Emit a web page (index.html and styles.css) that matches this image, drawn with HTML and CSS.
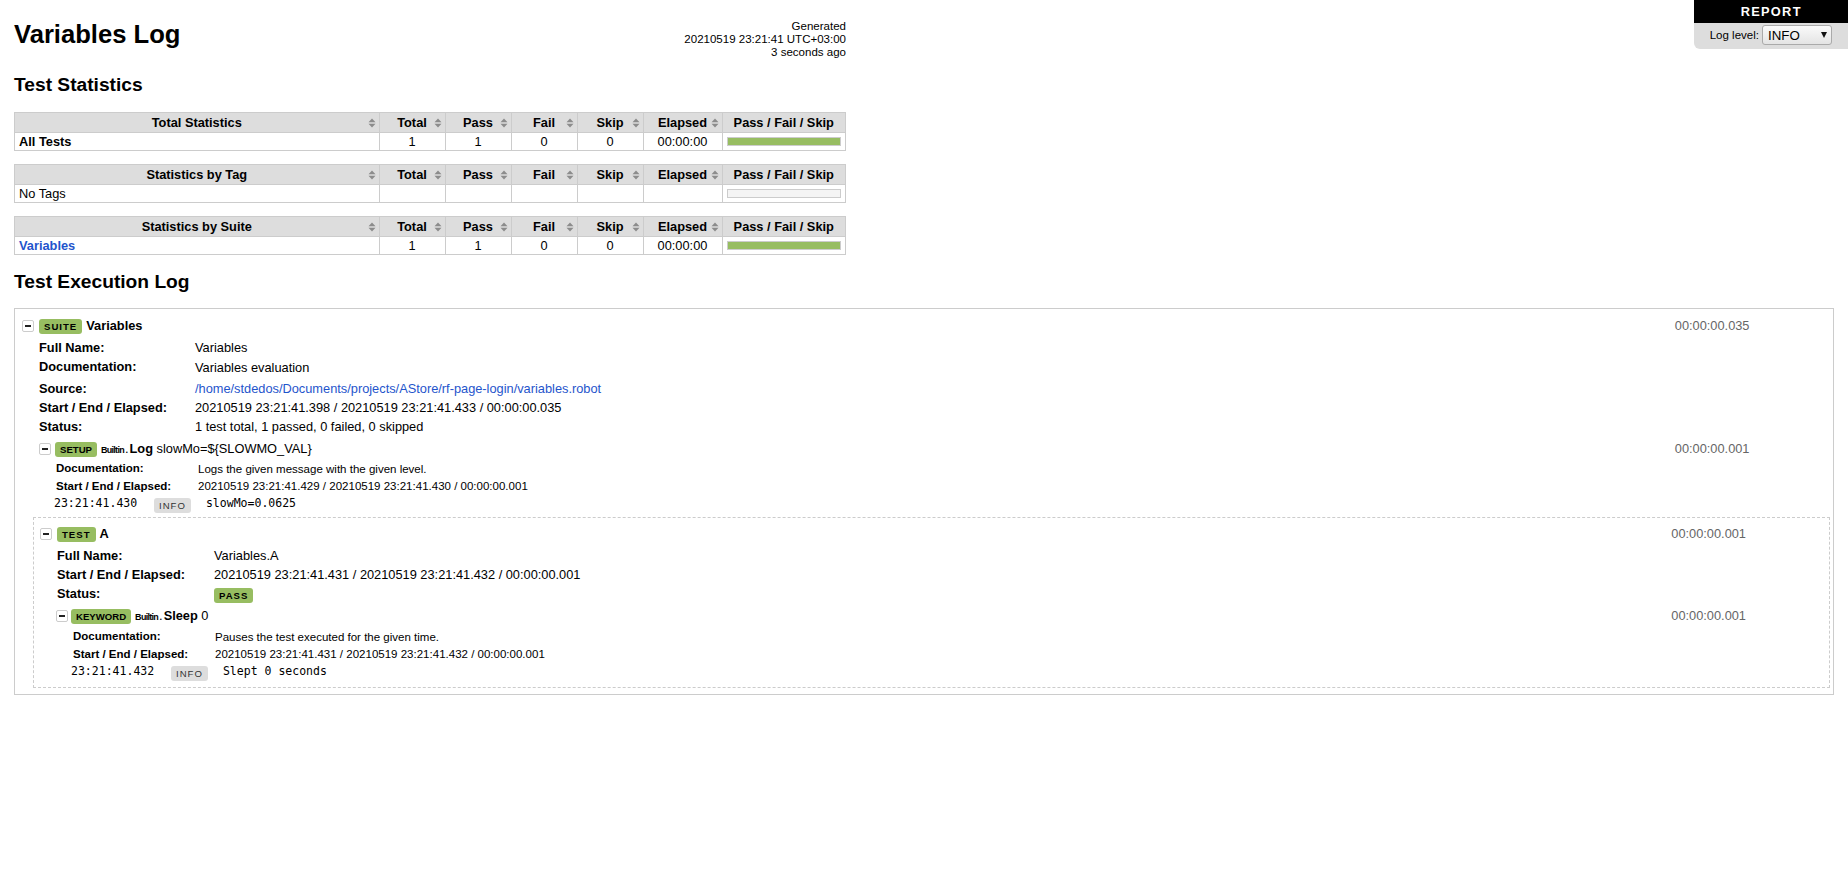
FILE: index.html
```html
<!DOCTYPE html>
<html>
<head>
<meta charset="utf-8">
<title>Variables Log</title>
<link rel="stylesheet" href="styles.css">
</head>
<body>
<svg class="defs" width="0" height="0"><defs><symbol id="sort" viewBox="0 0 8 10"><path d="M4 0.5 7.5 4.2H0.5Z M4 9.5 0.5 5.8H7.5Z"/></symbol></defs></svg>
<div class="top-right">
  <div class="report-link">REPORT</div>
  <div class="level-bar"><label class="level-label" for="lvl">Log level:</label><span class="select-wrap"><select id="lvl" class="level-select"><option>INFO</option><option>DEBUG</option><option>TRACE</option></select></span></div>
</div>
<header class="page-head">
  <h1 class="title">Variables Log</h1>
  <div class="generated">Generated<br>20210519 23:21:41 UTC+03:00<br>3 seconds ago</div>
</header>
<h2 class="section-title">Test Statistics</h2>
<table class="stats">
  <thead><tr><th class="c-name">Total Statistics<svg class="sort"><use href="#sort"/></svg></th><th class="c-stat">Total<svg class="sort"><use href="#sort"/></svg></th><th class="c-stat">Pass<svg class="sort"><use href="#sort"/></svg></th><th class="c-stat">Fail<svg class="sort"><use href="#sort"/></svg></th><th class="c-stat">Skip<svg class="sort"><use href="#sort"/></svg></th><th class="c-elapsed">Elapsed<svg class="sort"><use href="#sort"/></svg></th><th class="c-graph">Pass / Fail / Skip</th></tr></thead>
  <tbody><tr><td class="strong">All Tests</td><td class="mid">1</td><td class="mid">1</td><td class="mid">0</td><td class="mid">0</td><td class="mid">00:00:00</td><td class="graph-cell"><div class="graph"><div class="graph-pass"></div></div></td></tr></tbody>
</table>
<table class="stats">
  <thead><tr><th class="c-name">Statistics by Tag<svg class="sort"><use href="#sort"/></svg></th><th class="c-stat">Total<svg class="sort"><use href="#sort"/></svg></th><th class="c-stat">Pass<svg class="sort"><use href="#sort"/></svg></th><th class="c-stat">Fail<svg class="sort"><use href="#sort"/></svg></th><th class="c-stat">Skip<svg class="sort"><use href="#sort"/></svg></th><th class="c-elapsed">Elapsed<svg class="sort"><use href="#sort"/></svg></th><th class="c-graph">Pass / Fail / Skip</th></tr></thead>
  <tbody><tr><td>No Tags</td><td></td><td></td><td></td><td></td><td></td><td class="graph-cell"><div class="graph"></div></td></tr></tbody>
</table>
<table class="stats">
  <thead><tr><th class="c-name">Statistics by Suite<svg class="sort"><use href="#sort"/></svg></th><th class="c-stat">Total<svg class="sort"><use href="#sort"/></svg></th><th class="c-stat">Pass<svg class="sort"><use href="#sort"/></svg></th><th class="c-stat">Fail<svg class="sort"><use href="#sort"/></svg></th><th class="c-stat">Skip<svg class="sort"><use href="#sort"/></svg></th><th class="c-elapsed">Elapsed<svg class="sort"><use href="#sort"/></svg></th><th class="c-graph">Pass / Fail / Skip</th></tr></thead>
  <tbody><tr><td class="strong"><a href="#s1">Variables</a></td><td class="mid">1</td><td class="mid">1</td><td class="mid">0</td><td class="mid">0</td><td class="mid">00:00:00</td><td class="graph-cell"><div class="graph"><div class="graph-pass"></div></div></td></tr></tbody>
</table>
<h2 class="section-title exec-title">Test Execution Log</h2>

<section class="suite" id="s1">
  <div class="el-head">
    <div class="el-left"><span class="toggle"></span><span class="label pass lab-suite">SUITE</span><span class="name">Variables</span></div>
    <div class="elapsed">00:00:00.035</div>
  </div>
  <div class="meta meta-suite">
    <div class="row"><div class="key">Full Name:</div><div class="val">Variables</div></div>
    <div class="row row-doc"><div class="key">Documentation:</div><div class="val val-doc">Variables evaluation</div></div>
    <div class="row"><div class="key">Source:</div><div class="val"><a href="#s1">/home/stdedos/Documents/projects/AStore/rf-page-login/variables.robot</a></div></div>
    <div class="row"><div class="key">Start / End / Elapsed:</div><div class="val">20210519 23:21:41.398 / 20210519 23:21:41.433 / 00:00:00.035</div></div>
    <div class="row"><div class="key">Status:</div><div class="val">1 test total, 1 passed, 0 failed, 0 skipped</div></div>
  </div>
  <div class="kw">
    <div class="el-head kw-head">
      <div class="el-left"><span class="toggle toggle-kw"></span><span class="label pass lab-kw">SETUP</span><span class="parent">Builtin</span><span class="kw-name"><span class="dot">.</span><b>Log</b> <span class="args">slowMo=${SLOWMO_VAL}</span></span></div>
      <div class="elapsed">00:00:00.001</div>
    </div>
    <div class="meta meta-kw">
      <div class="row"><div class="key">Documentation:</div><div class="val val-doc">Logs the given message with the given level.</div></div>
      <div class="row"><div class="key">Start / End / Elapsed:</div><div class="val">20210519 23:21:41.429 / 20210519 23:21:41.430 / 00:00:00.001</div></div>
    </div>
    <div class="msg"><span class="time">23:21:41.430</span><span class="label lab-info">INFO</span><span class="msg-text">slowMo=0.0625</span></div>
  </div>
  <section class="test">
    <div class="el-head test-head">
      <div class="el-left"><span class="toggle"></span><span class="label pass lab-test">TEST</span><span class="name">A</span></div>
      <div class="elapsed elapsed-test">00:00:00.001</div>
    </div>
    <div class="meta meta-test">
      <div class="row"><div class="key">Full Name:</div><div class="val">Variables.A</div></div>
      <div class="row"><div class="key">Start / End / Elapsed:</div><div class="val">20210519 23:21:41.431 / 20210519 23:21:41.432 / 00:00:00.001</div></div>
      <div class="row"><div class="key">Status:</div><div class="val"><span class="label pass lab-status">PASS</span></div></div>
    </div>
    <div class="kw kw-in-test">
      <div class="el-head kw-head">
        <div class="el-left"><span class="toggle toggle-tight"></span><span class="label pass lab-kw">KEYWORD</span><span class="parent">Builtin</span><span class="kw-name"><span class="dot">.</span><b>Sleep</b> <span class="args">0</span></span></div>
        <div class="elapsed elapsed-test">00:00:00.001</div>
      </div>
      <div class="meta meta-kw">
        <div class="row"><div class="key">Documentation:</div><div class="val val-doc">Pauses the test executed for the given time.</div></div>
        <div class="row"><div class="key">Start / End / Elapsed:</div><div class="val">20210519 23:21:41.431 / 20210519 23:21:41.432 / 00:00:00.001</div></div>
      </div>
      <div class="msg"><span class="time">23:21:41.432</span><span class="label lab-info">INFO</span><span class="msg-text">Slept 0 seconds</span></div>
    </div>
  </section>
</section>
</body>
</html>
```
FILE: styles.css
```css
html, body { height: 100%; }
body {
  margin: 0;
  padding: 14px;
  box-sizing: border-box;
  background: #fff;
  color: #000;
  font-family: "Liberation Sans", Arial, sans-serif;
  font-size: 12.8px;
  line-height: 1.15;
}
a { color: #1f55cc; text-decoration: none; }
.defs { position: absolute; }

/* top right */
.top-right {
  position: fixed;
  top: 0;
  right: 0;
  width: 153.6px;
  text-align: center;
}
.report-link {
  background: #000;
  color: #fff;
  font-weight: bold;
  font-size: 12.8px;
  letter-spacing: 1.3px;
  height: 23px;
  line-height: 23px;
}
.level-bar {
  background: #ddd;
  height: 26px;
  border-bottom-left-radius: 6px;
  display: flex;
  align-items: center;
  justify-content: flex-end;
  gap: 3px;
  padding-right: 16px;
  font-size: 11.52px;
}
.select-wrap {
  position: relative;
  display: block;
  margin-top: -2px;
  height: 20px;
}
.select-wrap::after {
  content: "";
  position: absolute;
  right: 5px;
  top: 7px;
  border-left: 3px solid transparent;
  border-right: 3px solid transparent;
  border-top: 6px solid #111;
  pointer-events: none;
}
.level-select {
  display: block;
  box-sizing: border-box;
  appearance: none;
  -webkit-appearance: none;
  width: 70px;
  height: 20px;
  border: 1px solid #aaa;
  border-radius: 3px;
  background: linear-gradient(#fafafa, #e4e4e4);
  color: #000;
  font-family: "Liberation Sans", Arial, sans-serif;
  font-size: 13.3px;
  padding: 0 0 0 5px;
}

/* header */
.page-head {
  width: 832px;
  height: 59px;
  display: flex;
  justify-content: space-between;
  align-items: flex-start;
}
.title {
  margin: 4px 0 0;
  font-size: 25.6px;
  font-weight: bold;
  line-height: 32px;
}
.generated {
  margin-top: 6px;
  font-size: 11.52px;
  line-height: 13.2px;
  text-align: right;
  white-space: nowrap;
}
.section-title {
  margin: 0 0 16px;
  font-size: 19.2px;
  font-weight: bold;
  line-height: 23px;
}
.exec-title { margin-top: 15px; margin-bottom: 15px; }

/* stats */
.stats {
  width: 832px;
  table-layout: fixed;
  border-collapse: collapse;
  margin-bottom: 13px;
}
.stats th, .stats td { border: 1px solid #ccc; box-sizing: border-box; }
.stats th {
  position: relative;
  background: #ddd;
  height: 20px;
  padding: 1px 4px 0;
  font-weight: bold;
  text-align: center;
  white-space: nowrap;
}
.stats td {
  height: 18px;
  padding: 1px 4px 0;
}
.stats .graph-cell { padding: 0 4px; }
.c-name { width: auto; }
.c-stat { width: 66px; }
.c-elapsed { width: 79px; }
.c-graph { width: 123.5px; }
.strong { font-weight: bold; }
.mid { text-align: center; }
.sort {
  position: absolute;
  right: 3px;
  top: 5px;
  width: 8px;
  height: 10px;
  fill: #8c8c8c;
}
.graph {
  box-sizing: border-box;
  height: 9px;
  margin: 0 0 1px;
  border: 1px solid #ccc;
  background: #f4f4f4;
}
.graph-pass { height: 100%; background: #97bd61; }

/* log */
.suite {
  box-sizing: border-box;
  width: 1820px;
  height: 387px;
  border: 1px solid #ccc;
  padding: 8px 2px 5px;
}
.el-head {
  display: flex;
  justify-content: space-between;
  align-items: center;
  height: 18px;
}
.el-left {
  display: flex;
  align-items: center;
  padding-left: 5px;
  white-space: nowrap;
}
.test-head .el-left { padding-left: 6px; }
.toggle {
  position: relative;
  box-sizing: border-box;
  width: 12px;
  height: 12px;
  border: 1px solid #ccc;
  border-radius: 2px;
  margin-right: 5px;
  flex: none;
}
.toggle-kw { margin-right: 4px; }
.toggle-tight { margin-right: 3px; }
.toggle::after {
  content: "";
  position: absolute;
  left: 2px;
  top: 4px;
  width: 6px;
  height: 2px;
  background: #222;
}
.label {
  display: inline-block;
  border-radius: 3px;
  background: #ddd;
  color: #000;
  font-size: 9.6px;
  letter-spacing: 1px;
  line-height: 11px;
  padding: 2px 5px;
  white-space: nowrap;
}
.pass { background: #97bd61; font-weight: bold; }
.lab-suite { margin-right: 4px; }
.lab-test { margin-right: 4px; }
.lab-kw { margin-right: 4px; letter-spacing: 0; }
.name { font-weight: bold; }
.parent {
  font-size: 8.96px;
  letter-spacing: -0.7px;
  font-weight: bold;
  padding-top: 2px;
}
.dot { padding: 0 1px; }
.elapsed {
  color: #666;
  padding-right: 81.5px;
}
.elapsed-test { padding-right: 83px; }

.row { display: flex; }
.key { font-weight: bold; flex: none; }
.val { white-space: nowrap; }
.val-doc { padding-top: 1px; }

.meta-suite { padding: 3px 0 0 22px; }
.meta-suite .row { height: 19px; line-height: 19px; }
.meta-suite .key { width: 156px; }
.meta-suite .row-doc { height: 22px; }

.kw { margin-top: 4px; padding-left: 17px; }
.meta-kw { padding: 1px 0 0 22px; font-size: 11.52px; }
.meta-kw .row { height: 18px; line-height: 18px; }
.meta-kw .key { width: 142px; }
.msg {
  display: flex;
  align-items: center;
  height: 18px;
  padding-left: 20px;
}
.time {
  font-family: "DejaVu Sans Mono", monospace;
  font-size: 11.52px;
  width: 100px;
}
.lab-info { color: #333; margin-top: 2px; }
.msg-text {
  font-family: "DejaVu Sans Mono", monospace;
  font-size: 11.52px;
  padding-left: 15px;
}

.test {
  box-sizing: border-box;
  width: calc(100% - 17px);
  height: 171px;
  margin: 4px 0 0 16px;
  border: 1px dashed #ccc;
  padding: 7px 0 0;
}
.meta-test { padding: 3px 0 0 23px; }
.meta-test .row { height: 19px; line-height: 19px; }
.meta-test .key { width: 157px; }
.kw-in-test { padding-left: 17px; margin-top: 4px; }
.kw-in-test .meta-kw { padding-top: 2px; }
.lab-status { line-height: 11px; vertical-align: -1px; }
```
